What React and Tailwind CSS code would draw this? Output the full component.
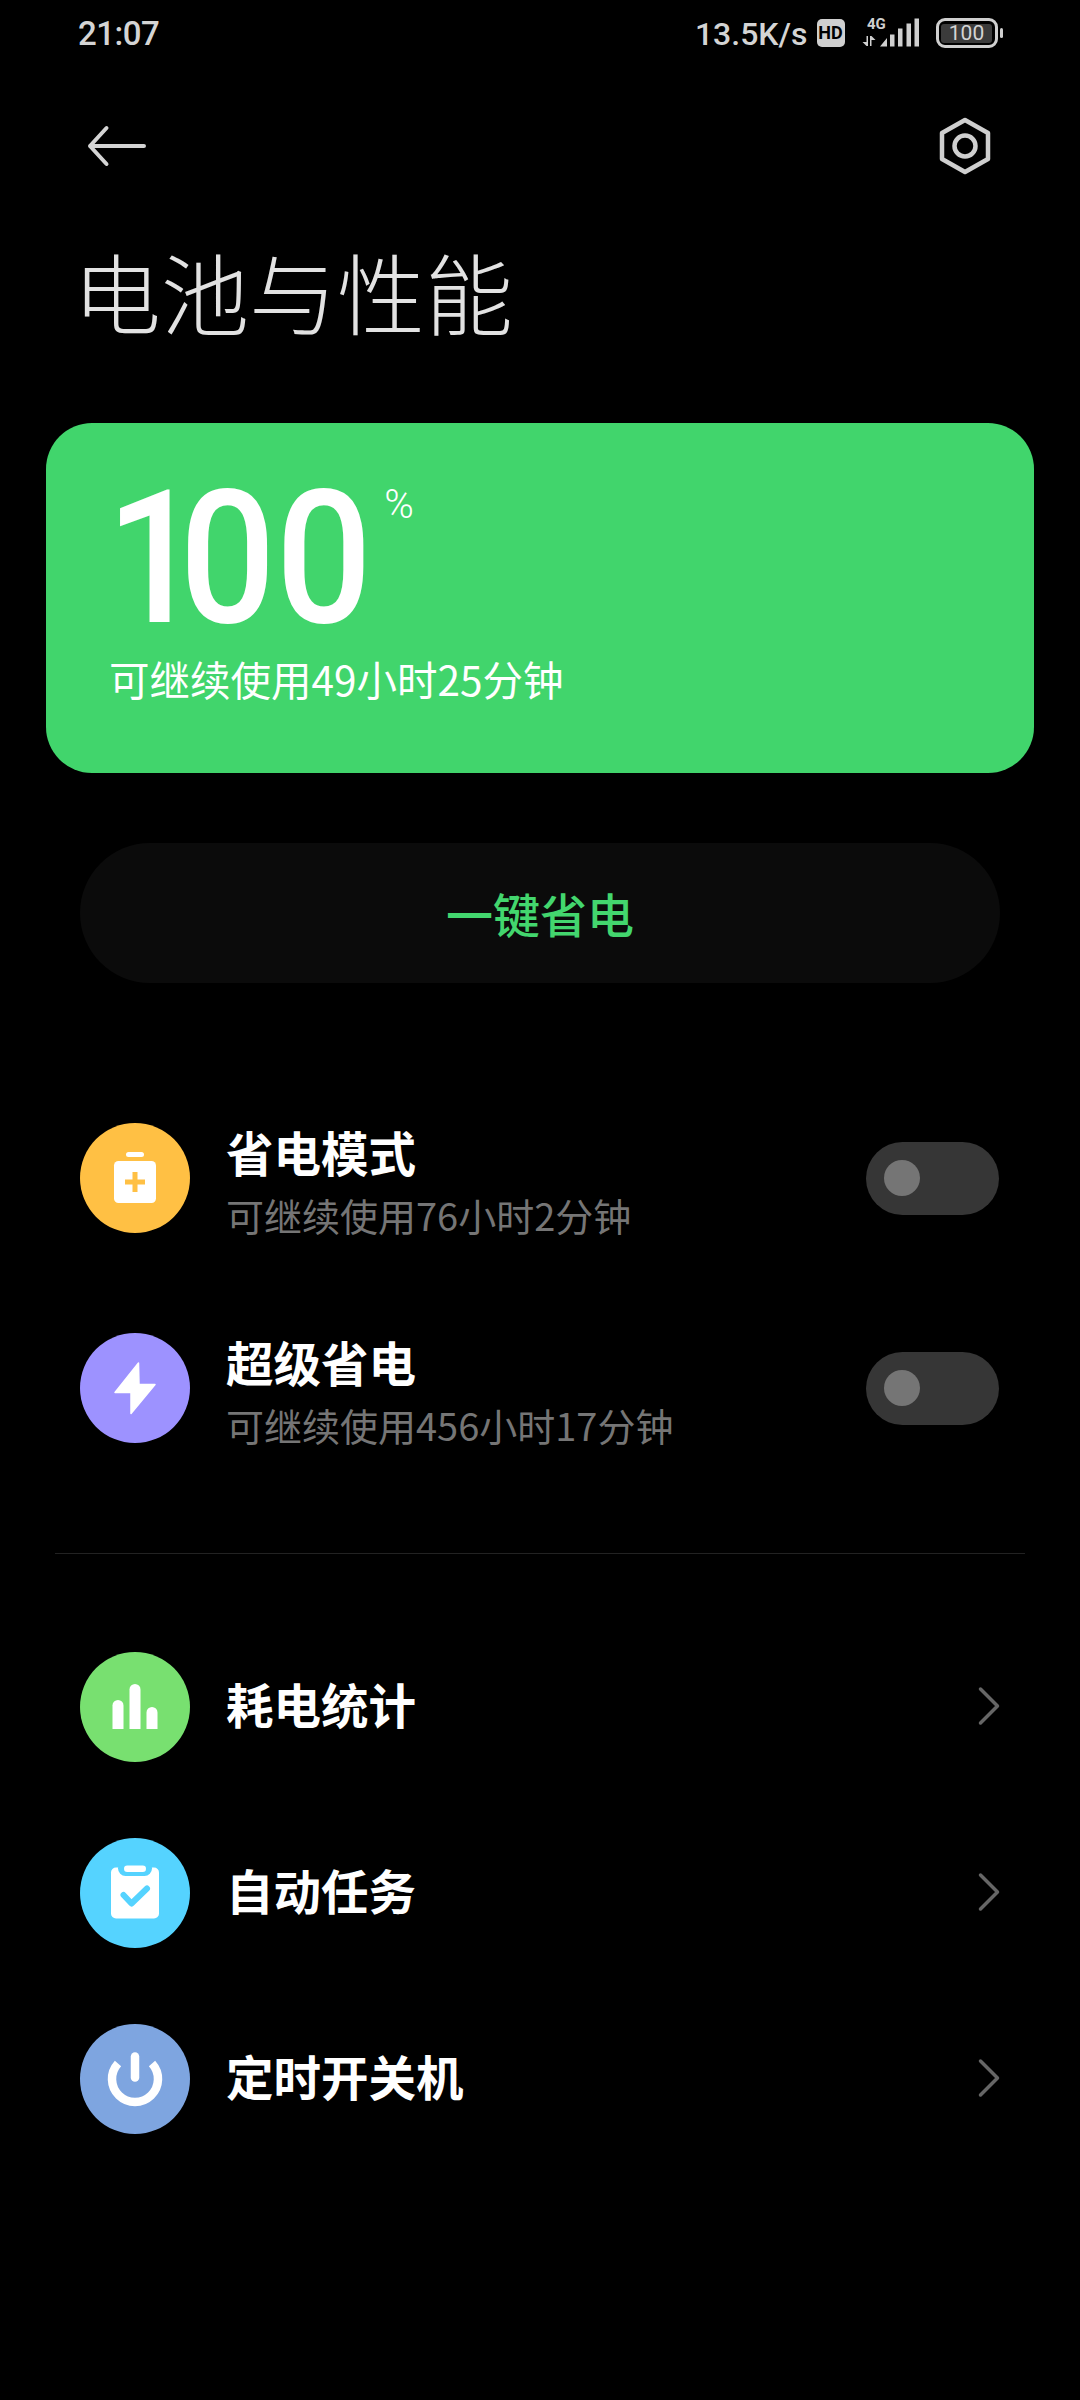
import React from 'react'

const CJK = "font-['Noto_Sans_CJK_SC','Noto_Sans',sans-serif]"
const NUM = "font-['Roboto','Noto_Sans_CJK_SC',sans-serif]"

const SaverIcon = () => (
    <svg viewBox="0 0 110 110" className="w-[110px] h-[110px]">
        <rect x="46" y="29" width="18" height="5" rx="2.5" fill="#fff" />
        <rect x="34" y="38" width="42" height="42" rx="4.5" fill="#fff" />
        <path d="M55 49v20M45 59h20" stroke="#ffc044" strokeWidth="5" strokeLinecap="butt" fill="none" />
    </svg>
)

const BoltIcon = () => (
    <svg viewBox="0 0 110 110" className="w-[110px] h-[110px]">
        <path d="M58.5 30L35 59.5H51V80.5L75 51.5H59Z" fill="#fff" stroke="#fff" strokeWidth="1.5" strokeLinejoin="round" />
    </svg>
)

const ChartIcon = () => (
    <svg viewBox="0 0 110 110" className="w-[110px] h-[110px]" fill="#fff">
        <path d="M32.5 77V53.5a5.5 5.5 0 0 1 11 0V77Z" />
        <path d="M49.5 77V37.5a5.5 5.5 0 0 1 11 0V77Z" />
        <path d="M66.5 77V60.5a5.5 5.5 0 0 1 11 0V77Z" />
    </svg>
)

const ClipboardIcon = () => (
    <svg viewBox="0 0 110 110" className="w-[110px] h-[110px]">
        <rect x="31" y="29.5" width="48" height="51" rx="5" fill="#fff" />
        <rect x="38" y="23" width="34" height="15" rx="7.5" fill="#55d3ff" />
        <rect x="44" y="27.5" width="22" height="6.5" rx="3.25" fill="#fff" />
        <path d="M43.5 57L51.5 65.5L67 50.5" stroke="#55d3ff" strokeWidth="6" strokeLinecap="round" strokeLinejoin="round" fill="none" />
    </svg>
)

const PowerIcon = () => (
    <svg viewBox="0 0 110 110" className="w-[110px] h-[110px]" fill="none" stroke="#fff" strokeWidth="8.5" strokeLinecap="round">
        <path d="M55 32.5V53.5" />
        <path d="M38 39.5A23 23 0 1 0 72 39.5" strokeLinecap="butt" />
    </svg>
)

const Chevron = () => (
    <svg viewBox="0 0 24 40" className="w-[24px] h-[40px] -mt-[2px]" fill="none" stroke="#666" strokeWidth="3.5" strokeLinecap="round" strokeLinejoin="round">
        <path d="M4.5 3L21.5 20L4.5 37" />
    </svg>
)

const Toggle = () => (
    <div className="w-[133px] h-[73px] mr-[1px] rounded-full bg-[#363636] flex items-center pl-[18px]">
        <div className="w-[36px] h-[36px] rounded-full bg-[#757575]" />
    </div>
)

const StatusBar = () => (
    <div className={`h-[66px] flex items-center justify-between pl-[78px] pr-[77px] text-[#d4d4d4] ${NUM}`}>
        <span className="pt-[2px] text-[33px] font-medium tracking-[-0.5px]">21:07</span>
        <div className="flex items-center">
            <span className="pt-[2px] text-[32px] font-medium leading-none">13.5K/s</span>
            <div className="ml-[9px] w-[28px] h-[28px] rounded-[5px] bg-[#cfcfcf] flex items-center justify-center text-black text-[18px] font-bold leading-none">HD</div>
            <svg viewBox="0 0 58 30" className="ml-[17px] w-[58px] h-[30px] overflow-visible" fill="#cfcfcf">
                <text x="5" y="10.500" fontSize="15" fontWeight="700" fontFamily="Roboto">4G</text>
                <path d="M4.500 18H6V28H4.500ZM0.500 24H4.500V28ZM8 18H9.500V28H8ZM9.500 18L13.500 22H9.500Z" />
                <path d="M18 28.500L25 20V28.500ZM28 16.500h4.500V28.500H28ZM36 10.500h4.500V28.500H36ZM44.500 5.500H49V28.500H44.500ZM52.500 0.500H57V28.500H52.500Z" />
            </svg>
            <div className="ml-[16px] flex items-center">
                <div className="w-[62px] h-[30px] rounded-[9px] border-[3.5px] border-[#cfcfcf] p-[2.5px]">
                    <div className="w-full h-full rounded-[3px] bg-[#3b3b3b] flex items-center justify-center text-[21px] leading-none text-[#d4d4d4]">100</div>
                </div>
                <div className="ml-[2px] w-[3.5px] h-[10px] rounded-full bg-[#cfcfcf]" />
            </div>
        </div>
    </div>
)

const Row = ({ color, icon, title, sub, right }) => (
    <div className={`flex items-center pl-[80px] pr-[80px] ${sub ? 'h-[210px]' : 'h-[186px]'}`}>
        <div className={`w-[110px] h-[110px] rounded-full ${color}`}>{icon}</div>
        <div className={`ml-[36px] flex-1 ${sub ? 'pt-[6px]' : 'pb-[6px]'}`}>
            <p className="text-[47.500px] font-bold leading-[60px] text-white">{title}</p>
            {sub && <p className="mt-[8px] text-[38px] leading-[50px] text-[#757575]">{sub}</p>}
        </div>
        {right}
    </div>
)

export default function App() {
    return (
        <div className={`w-[1080px] min-h-[2400px] bg-black ${CJK}`}>
            <StatusBar />

            <div className="h-[160px] flex items-center justify-between pl-[85px] pr-[88px]">
                <svg viewBox="0 0 62 42" className="w-[62px] h-[42px]" fill="none" stroke="#d4d4d4" strokeWidth="4" strokeLinecap="round" strokeLinejoin="round">
                    <path d="M59 21H5M21.500 3L5 21L21.500 39" />
                </svg>
                <svg viewBox="0 0 54 58" className="w-[54px] h-[58px]" fill="none" stroke="#cfcfcf" strokeWidth="4.500" strokeLinejoin="round">
                    <path d="M27 3L50 16V42L27 55L4 42V16Z" />
                    <circle cx="27" cy="29" r="10.500" />
                </svg>
            </div>

            <h1 className="h-[136px] pl-[73px] text-[88px] font-extralight leading-[128px] text-[#e2e2e2]">电池与性能</h1>

            <div className="mt-[61px] mx-[46px] h-[350px] rounded-[46px] bg-[#41d56c] pl-[63px] text-white">
                <div className="flex items-start pt-[42px] h-[231px]">
                    {/* the 1 sits much closer to the first 0 than in Roboto */}
                    <span className={`block -ml-[3px] origin-left scale-x-[0.91] text-[186px] font-medium leading-[186px] ${NUM}`}>
                        <span className="tracking-[-25px]">1</span>00
                    </span>
                    <span className={`block -ml-[14px] mt-[20px] text-[40px] font-light leading-none ${NUM}`}>%</span>
                </div>
                <p className="text-[40.500px] leading-[50px]">可继续使用49小时25分钟</p>
            </div>

            <div className="mt-[70px] mx-[80px] h-[140px] rounded-full bg-[#0b0b0b] flex items-center justify-center text-[47px] font-medium text-[#43d66e]">
                一键省电
            </div>

            <div className="mt-[90px]">
                <Row color="bg-[#ffc044]" icon={<SaverIcon />} title="省电模式" sub="可继续使用76小时2分钟" right={<Toggle />} />
                <Row color="bg-[#9d92ff]" icon={<BoltIcon />} title="超级省电" sub="可继续使用456小时17分钟" right={<Toggle />} />
            </div>

            <div className="mt-[60px] mx-[55px] h-px bg-[#222222]" />

            <div className="mt-[60px]">
                <Row color="bg-[#78e070]" icon={<ChartIcon />} title="耗电统计" right={<Chevron />} />
                <Row color="bg-[#55d3ff]" icon={<ClipboardIcon />} title="自动任务" right={<Chevron />} />
                <Row color="bg-[#7ea5e0]" icon={<PowerIcon />} title="定时开关机" right={<Chevron />} />
            </div>
        </div>
    )
}
